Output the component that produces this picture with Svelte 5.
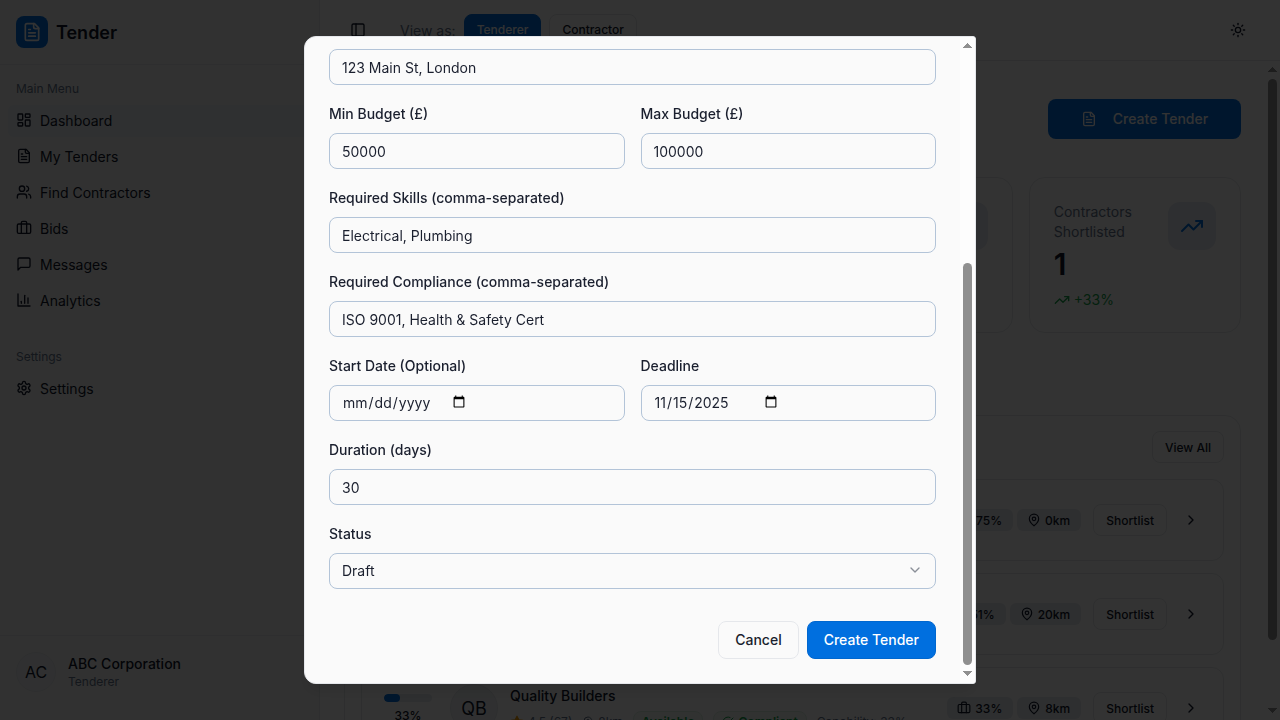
<script>
	import { onMount } from 'svelte';

	let formScroller;

	const icons = {
		dashboard: '<rect width="7" height="9" x="3" y="3" rx="1"/><rect width="7" height="5" x="14" y="3" rx="1"/><rect width="7" height="9" x="14" y="12" rx="1"/><rect width="7" height="5" x="3" y="16" rx="1"/>',
		file: '<path d="M15 2H6a2 2 0 0 0-2 2v16a2 2 0 0 0 2 2h12a2 2 0 0 0 2-2V7Z"/><path d="M14 2v4a2 2 0 0 0 2 2h4"/><path d="M10 9H8"/><path d="M16 13H8"/><path d="M16 17H8"/>',
		users: '<path d="M16 21v-2a4 4 0 0 0-4-4H6a4 4 0 0 0-4 4v2"/><circle cx="9" cy="7" r="4"/><path d="M22 21v-2a4 4 0 0 0-3-3.87"/><path d="M16 3.13a4 4 0 0 1 0 7.75"/>',
		briefcase: '<path d="M16 20V4a2 2 0 0 0-2-2h-4a2 2 0 0 0-2 2v16"/><rect width="20" height="14" x="2" y="6" rx="2"/>',
		message: '<path d="M21 15a2 2 0 0 1-2 2H7l-4 4V5a2 2 0 0 1 2-2h14a2 2 0 0 1 2 2z"/>',
		chart: '<path d="M3 3v18h18"/><path d="M18 17V9"/><path d="M13 17V5"/><path d="M8 17v-3"/>',
		gear: '<path d="M12.22 2h-.44a2 2 0 0 0-2 2v.18a2 2 0 0 1-1 1.73l-.43.25a2 2 0 0 1-2 0l-.15-.08a2 2 0 0 0-2.73.73l-.22.38a2 2 0 0 0 .73 2.73l.15.1a2 2 0 0 1 1 1.72v.51a2 2 0 0 1-1 1.74l-.15.09a2 2 0 0 0-.73 2.73l.22.38a2 2 0 0 0 2.73.73l.15-.08a2 2 0 0 1 2 0l.43.25a2 2 0 0 1 1 1.73V20a2 2 0 0 0 2 2h.44a2 2 0 0 0 2-2v-.18a2 2 0 0 1 1-1.73l.43-.25a2 2 0 0 1 2 0l.15.08a2 2 0 0 0 2.73-.73l.22-.39a2 2 0 0 0-.73-2.73l-.15-.08a2 2 0 0 1-1-1.74v-.5a2 2 0 0 1 1-1.74l.15-.09a2 2 0 0 0 .73-2.73l-.22-.38a2 2 0 0 0-2.73-.73l-.15.08a2 2 0 0 1-2 0l-.43-.25a2 2 0 0 1-1-1.73V4a2 2 0 0 0-2-2z"/><circle cx="12" cy="12" r="3"/>',
		panel: '<rect width="18" height="18" x="3" y="3" rx="2"/><path d="M9 3v18"/>',
		sun: '<circle cx="12" cy="12" r="4"/><path d="M12 2v2"/><path d="M12 20v2"/><path d="m4.93 4.93 1.41 1.41"/><path d="m17.66 17.66 1.41 1.41"/><path d="M2 12h2"/><path d="M20 12h2"/><path d="m6.34 17.66-1.41 1.41"/><path d="m19.07 4.93-1.41 1.41"/>',
		trending: '<polyline points="22 7 13.5 15.5 8.5 10.5 2 17"/><polyline points="16 7 22 7 22 13"/>',
		pin: '<path d="M20 10c0 6-8 12-8 12s-8-6-8-12a8 8 0 0 1 16 0Z"/><circle cx="12" cy="10" r="3"/>',
		chevronRight: '<path d="m9 18 6-6-6-6"/>',
		chevronDown: '<path d="m6 9 6 6 6-6"/>',
		star: '<polygon points="12 2 15.09 8.26 22 9.27 17 14.14 18.18 21.02 12 17.77 5.82 21.02 7 14.14 2 9.27 8.91 8.26"/>',
		check: '<path d="M22 11.08V12a10 10 0 1 1-5.93-9.14"/><polyline points="22 4 12 14.01 9 11.01"/>'
	};

	const mainMenu = [
		{ label: 'Dashboard', icon: 'dashboard', active: true },
		{ label: 'My Tenders', icon: 'file' },
		{ label: 'Find Contractors', icon: 'users' },
		{ label: 'Bids', icon: 'briefcase' },
		{ label: 'Messages', icon: 'message' },
		{ label: 'Analytics', icon: 'chart' }
	];

	const stats = [
		{ label: 'Active Tenders', value: '3', change: '+12%', icon: 'file' },
		{ label: 'Bids Received', value: '8', change: '+25%', icon: 'briefcase' },
		{ label: 'Open Messages', value: '2', change: '+8%', icon: 'message' },
		{ label: 'Contractors Shortlisted', value: '1', change: '+33%', icon: 'trending' }
	];

	const matches = [
		{ initials: 'AE', name: 'Apex Electrical', score: 75, rating: '4.8 (112)', km: 0 },
		{ initials: 'BS', name: 'BuildRight Services', score: 51, rating: '4.6 (89)', km: 20 },
		{ initials: 'QB', name: 'Quality Builders', score: 33, rating: '4.5 (67)', km: 8 }
	];

	onMount(() => {
		// dialog opens scrolled down to the footer
		formScroller.scrollTop = formScroller.scrollHeight;
	});
</script>

{#snippet icon(name, size = 16)}
	<svg width={size} height={size} viewBox="0 0 24 24" fill="none" stroke="currentColor" stroke-width="2" stroke-linecap="round" stroke-linejoin="round">
		{@html icons[name]}
	</svg>
{/snippet}

{#snippet scrollbar(thumbHeight, atEnd)}
	<div class="bar">
		<div class="arrow up"></div>
		<div class="track" class:at-end={atEnd}>
			<div class="thumb" style="height: {thumbHeight}px"></div>
		</div>
		<div class="arrow down"></div>
	</div>
{/snippet}

<div class="shell">
	<aside class="sidebar">
		<div class="brand">
			<div class="brand-icon">{@render icon('file', 20)}</div>
			<span class="brand-name">Tender</span>
		</div>

		<nav class="nav">
			<div class="nav-group">
				<div class="nav-title">Main Menu</div>
				{#each mainMenu as item}
					<a class="nav-item" class:active={item.active} href="#top">
						{@render icon(item.icon)}
						{item.label}
					</a>
				{/each}
			</div>
			<div class="nav-group">
				<div class="nav-title">Settings</div>
				<a class="nav-item" href="#top">
					{@render icon('gear')}
					Settings
				</a>
			</div>
		</nav>

		<div class="account">
			<div class="avatar small">AC</div>
			<div class="account-text">
				<div class="account-name">ABC Corporation</div>
				<div class="account-role">Tenderer</div>
			</div>
		</div>
	</aside>

	<div class="main">
		<header class="topbar">
			<span class="panel-toggle">{@render icon('panel')}</span>
			<span class="view-as">View as:</span>
			<button class="role-btn primary">Tenderer</button>
			<button class="role-btn">Contractor</button>
			<span class="theme-toggle">{@render icon('sun')}</span>
		</header>

		<div class="content-wrap">
			<div class="content">
				<div class="page-head">
					<div>
						<h1>Dashboard</h1>
						<p>Manage your tenders and find contractors</p>
					</div>
					<button class="create-btn">
						{@render icon('file')}
						Create Tender
					</button>
				</div>

				<div class="stats">
					{#each stats as stat}
						<div class="stat-card">
							<div class="stat-text">
								<div class="stat-label">{stat.label}</div>
								<div class="stat-value">{stat.value}</div>
								<div class="stat-change">{@render icon('trending')} {stat.change}</div>
							</div>
							<div class="stat-icon">{@render icon(stat.icon, 24)}</div>
						</div>
					{/each}
				</div>

				<section class="matches">
					<div class="matches-head">
						<h2>Recommended Contractors</h2>
						<button class="ghost-btn">View All</button>
					</div>
					<div class="match-list">
						{#each matches as match}
							<div class="match-row">
								<div class="score">
									<div class="score-track"><div class="score-fill" style="width: {match.score}%"></div></div>
									<span>{match.score}%</span>
								</div>
								<div class="avatar">{match.initials}</div>
								<div class="match-info">
									<div class="match-name">{match.name}</div>
									<div class="match-meta">
										<span class="meta-item"><span class="star">{@render icon('star', 14)}</span> {match.rating}</span>
										<span class="meta-item">{@render icon('pin', 12)} {match.km}km</span>
										<span class="tag">Available</span>
										<span class="tag">{@render icon('check', 12)} Compliant</span>
										<span>Capability: {match.score}%</span>
									</div>
								</div>
								<div class="match-actions">
									<span class="chip">{@render icon('briefcase', 14)} {match.score}%</span>
									<span class="chip">{@render icon('pin', 14)} {match.km}km</span>
									<button class="ghost-btn shortlist">Shortlist</button>
									<span class="chevron">{@render icon('chevronRight')}</span>
								</div>
							</div>
						{/each}
					</div>
				</section>
			</div>
			{@render scrollbar(561, false)}
		</div>
	</div>
</div>

<div class="overlay"></div>

<div class="dialog" role="dialog">
	<div class="dialog-body" bind:this={formScroller}>
		<div class="dialog-head">
			<h2>Create New Tender</h2>
			<p>Fill in the details below to publish a new tender to contractors.</p>
		</div>

		<form class="form">
			<div class="field">
				<label for="title">Tender Title</label>
				<input id="title" value="Office Renovation" />
			</div>
			<div class="field">
				<label for="description">Description</label>
				<textarea id="description">Full refurbishment of a two-floor office.</textarea>
			</div>
			<div class="field">
				<label for="location">Location</label>
				<input id="location" value="123 Main St, London" />
			</div>
			<div class="two-col">
				<div class="field">
					<label for="min">Min Budget (£)</label>
					<input id="min" value="50000" />
				</div>
				<div class="field">
					<label for="max">Max Budget (£)</label>
					<input id="max" value="100000" />
				</div>
			</div>
			<div class="field">
				<label for="skills">Required Skills (comma-separated)</label>
				<input id="skills" value="Electrical, Plumbing" />
			</div>
			<div class="field">
				<label for="compliance">Required Compliance (comma-separated)</label>
				<input id="compliance" value="ISO 9001, Health &amp; Safety Cert" />
			</div>
			<div class="two-col">
				<div class="field">
					<label for="start">Start Date (Optional)</label>
					<input id="start" type="date" />
				</div>
				<div class="field">
					<label for="deadline">Deadline</label>
					<input id="deadline" type="date" value="2025-11-15" />
				</div>
			</div>
			<div class="field">
				<label for="duration">Duration (days)</label>
				<input id="duration" value="30" />
			</div>
			<div class="field">
				<label for="status">Status</label>
				<button id="status" type="button" class="select">
					Draft
					<span class="select-chevron">{@render icon('chevronDown')}</span>
				</button>
			</div>
			<div class="form-actions">
				<button type="button" class="cancel">Cancel</button>
				<button type="button" class="submit">Create Tender</button>
			</div>
		</form>
	</div>
	{@render scrollbar(402, true)}
</div>

<style>
	:global(body) {
		font-family: Inter, "Liberation Sans", sans-serif;
		color: #0f172a;
		overflow: hidden;
	}

	.shell {
		display: flex;
		height: 100vh;
		background: #fff;
	}

	.sidebar {
		width: 320px;
		flex-shrink: 0;
		display: flex;
		flex-direction: column;
		background: #f5f5f5;
		border-right: 1px solid #e5e7eb;
		box-sizing: border-box;
	}

	.brand {
		height: 65px;
		flex-shrink: 0;
		box-sizing: border-box;
		display: flex;
		align-items: center;
		gap: 8px;
		padding: 0 16px;
		border-bottom: 1px solid #e5e7eb;
	}

	.brand-icon {
		width: 32px;
		height: 32px;
		border-radius: 8px;
		background: #006fdf;
		color: #fff;
		display: flex;
		align-items: center;
		justify-content: center;
	}

	.brand-name {
		font-size: 18px;
		font-weight: 600;
	}

	.nav {
		flex: 1;
		padding: 16px 8px;
		display: flex;
		flex-direction: column;
		gap: 32px;
	}

	.nav-group {
		display: flex;
		flex-direction: column;
		gap: 4px;
	}

	.nav-title {
		font-size: 12px;
		color: #64748b;
		padding: 0 8px;
		height: 16px;
		line-height: 16px;
		margin-bottom: 4px;
	}

	.nav-item {
		height: 32px;
		box-sizing: border-box;
		display: flex;
		align-items: center;
		gap: 8px;
		padding: 0 8px 2px;
		border-radius: 6px;
		font-size: 14px;
		color: #0f172a;
		text-decoration: none;
	}

	.nav-item.active {
		background: #e9edf2;
	}

	.account {
		height: 85px;
		flex-shrink: 0;
		box-sizing: border-box;
		display: flex;
		align-items: flex-start;
		gap: 12px;
		padding: 16px 16px 0;
		border-top: 1px solid #e5e7eb;
	}

	.account-text {
		margin-top: 2px;
	}

	.account-name {
		font-size: 14px;
		font-weight: 500;
		line-height: 20px;
	}

	.account-role {
		font-size: 12px;
		color: #64748b;
		line-height: 16px;
	}

	.avatar {
		width: 48px;
		height: 48px;
		flex-shrink: 0;
		box-sizing: border-box;
		border: 1px solid #e5e7eb;
		border-radius: 50%;
		background: #eef1f5;
		display: flex;
		align-items: center;
		justify-content: center;
		font-size: 18px;
	}

	.avatar.small {
		width: 40px;
		height: 40px;
		font-size: 16px;
	}

	.main {
		flex: 1;
		min-width: 0;
		display: flex;
		flex-direction: column;
	}

	.topbar {
		height: 61px;
		flex-shrink: 0;
		box-sizing: border-box;
		display: flex;
		align-items: center;
		padding: 0 34px 0 30px;
		border-bottom: 1px solid #e5e7eb;
	}

	.panel-toggle {
		display: flex;
		margin-right: 34px;
	}

	.view-as {
		font-size: 14px;
		color: #64748b;
		margin-right: 8px;
	}

	.role-btn {
		height: 32px;
		padding: 0 12px 1px;
		margin-right: 8px;
		border: 1px solid #e5e7eb;
		border-radius: 8px;
		background: #fff;
		font: 500 12px Inter, sans-serif;
		color: #0f172a;
	}

	.role-btn.primary {
		background: #006fdf;
		border-color: #006fdf;
		color: #fff;
	}

	.theme-toggle {
		display: flex;
		margin-left: auto;
	}

	.content-wrap {
		flex: 1;
		min-height: 0;
		display: flex;
	}

	.content {
		flex: 1;
		min-width: 0;
		overflow-y: auto;
		padding: 29px 24px 24px;
	}

	/* classic scrollbar, drawn so it shows in the headless page too */
	.bar {
		width: 15px;
		flex-shrink: 0;
		display: flex;
		flex-direction: column;
	}

	.track {
		flex: 1;
		min-height: 0;
		padding: 3px;
		display: flex;
		flex-direction: column;
	}

	.track.at-end {
		justify-content: flex-end;
	}

	.thumb {
		flex-shrink: 0;
		background: #909090;
		border-radius: 5px;
	}

	.arrow {
		height: 15px;
		flex-shrink: 0;
		background-repeat: no-repeat;
		background-size: 9px 5px;
	}

	.arrow.up {
		background-image: conic-gradient(from 135deg at 50% 0, #909090 90deg, transparent 0);
		background-position: center 6px;
	}

	.arrow.down {
		background-image: conic-gradient(from -45deg at 50% 100%, #909090 90deg, transparent 0);
		background-position: center 3px;
	}

	.page-head {
		display: flex;
		justify-content: space-between;
		align-items: center;
		margin-bottom: 30px;
	}

	.page-head h1 {
		font-size: 30px;
		margin: 0;
	}

	.page-head p {
		margin: 4px 0 0;
		font-size: 14px;
		color: #64748b;
	}

	.create-btn {
		width: 193px;
		height: 40px;
		display: flex;
		align-items: center;
		justify-content: center;
		gap: 16px;
		border: 0;
		border-radius: 8px;
		background: #006fdf;
		color: #fff;
		font: 500 14px Inter, sans-serif;
	}

	.stats {
		display: grid;
		grid-template-columns: repeat(4, 1fr);
		gap: 16px;
		margin-bottom: 82px;
	}

	.stat-card {
		height: 156px;
		box-sizing: border-box;
		display: flex;
		justify-content: space-between;
		padding: 24px;
		border: 1px solid #e5e7eb;
		border-radius: 16px;
	}

	.stat-label {
		font-size: 14px;
		line-height: 20px;
		color: #64748b;
		margin-right: 20px;
	}

	.stat-value {
		font-size: 30px;
		font-weight: 600;
		line-height: 36px;
		margin-top: 4px;
	}

	.stat-change {
		display: flex;
		align-items: center;
		gap: 4px;
		margin-top: 9px;
		font-size: 14px;
		color: #16a34a;
	}

	.stat-icon {
		width: 48px;
		height: 48px;
		flex-shrink: 0;
		border-radius: 12px;
		background: #e6ebf2;
		color: #006fdf;
		display: flex;
		align-items: center;
		justify-content: center;
	}

	.matches {
		border: 1px solid #e5e7eb;
		border-radius: 16px;
		padding: 15px 16px 16px;
	}

	.matches-head {
		display: flex;
		justify-content: space-between;
		align-items: center;
		margin-bottom: 16px;
	}

	.matches-head h2 {
		font-size: 18px;
		font-weight: 600;
		margin: 0;
	}

	.ghost-btn {
		height: 32px;
		padding: 0 12px;
		border: 1px solid #e5e7eb;
		border-radius: 8px;
		background: #fff;
		color: #0f172a;
		font: 500 12px Inter, sans-serif;
	}

	.match-list {
		display: flex;
		flex-direction: column;
		gap: 12px;
	}

	.match-row {
		height: 82px;
		flex-shrink: 0;
		box-sizing: border-box;
		display: flex;
		align-items: center;
		gap: 18px;
		padding: 0 24px 0 21px;
		border: 1px solid #e5e7eb;
		border-radius: 12px;
	}

	.score {
		width: 48px;
		margin-left: 1px;
		flex-shrink: 0;
		text-align: center;
		font-size: 12px;
		font-weight: 500;
	}

	.score-track {
		height: 8px;
		border-radius: 4px;
		background: #e6eaf0;
		margin-bottom: 6px;
		overflow: hidden;
	}

	.score-fill {
		height: 100%;
		background: #006fdf;
		border-radius: 4px;
	}

	.match-info {
		margin: 2px 0 0 -6px;
		min-width: 0;
		flex: 1;
	}

	.match-name {
		font-size: 14px;
		font-weight: 500;
		line-height: 20px;
		margin-bottom: 5px;
	}

	.match-meta {
		display: flex;
		align-items: center;
		gap: 10px;
		font-size: 12px;
		color: #64748b;
		white-space: nowrap;
	}

	.meta-item {
		display: flex;
		align-items: center;
		gap: 4px;
	}

	.star {
		display: flex;
		color: #f59e0b;
	}

	.star :global(svg) {
		fill: currentColor;
	}

	.tag {
		display: inline-flex;
		align-items: center;
		gap: 4px;
		height: 20px;
		padding: 0 8px;
		border: 1px solid #dcefe2;
		border-radius: 8px;
		font-weight: 600;
		color: #16a34a;
		background: #f3fbf5;
	}

	.match-actions {
		display: flex;
		align-items: center;
		gap: 4px;
		flex-shrink: 0;
	}

	.chip {
		display: flex;
		align-items: center;
		gap: 4px;
		height: 22px;
		padding: 0 11px 0 10px;
		border-radius: 6px;
		background: #e6eaf0;
		font-size: 12px;
		font-weight: 500;
	}

	.shortlist {
		margin-left: 8px;
	}

	.chevron {
		display: flex;
		margin: 0 0 0 12px;
	}

	.overlay {
		position: fixed;
		inset: 0;
		background: rgba(0, 0, 0, 0.8);
	}

	.dialog {
		position: fixed;
		left: 304px;
		top: 36px;
		width: 672px;
		height: 648px;
		box-sizing: border-box;
		display: flex;
		background: #fafafa;
		border: 1px solid #e5e7eb;
		border-radius: 12px 3px 3px 12px;
		box-shadow: 0 10px 15px -3px rgba(0, 0, 0, 0.1);
	}

	.dialog .bar {
		background: #fdfdfd;
		border-radius: 0 2px 2px 0;
	}

	.dialog-body {
		flex: 1;
		min-width: 0;
		box-sizing: border-box;
		padding: 24px;
		overflow-y: auto;
	}

	.dialog-head h2 {
		font-size: 18px;
		font-weight: 600;
		margin: 0 0 6px;
	}

	.dialog-head p {
		font-size: 14px;
		color: #64748b;
		margin: 0 0 32px;
	}

	.form {
		display: flex;
		flex-direction: column;
		gap: 20px;
	}

	.two-col {
		display: grid;
		grid-template-columns: 1fr 1fr;
		gap: 16px;
	}

	.field {
		display: flex;
		flex-direction: column;
		gap: 10px;
	}

	label {
		font-size: 14px;
		font-weight: 500;
		line-height: 18px;
		color: #1a1f2e;
	}

	input,
	textarea,
	.select {
		box-sizing: border-box;
		width: 100%;
		height: 36px;
		padding: 0 12px;
		border: 1px solid #b3c4d8;
		border-radius: 8px;
		background: transparent;
		font: 400 14px Inter, sans-serif;
		color: #1a1f2e;
	}

	input[type="date"] {
		padding-bottom: 2px;
	}

	input[type="date"]::-webkit-datetime-edit {
		flex: 0 0 108px;
	}

	input[type="date"]::-webkit-calendar-picker-indicator {
		margin-left: 0;
	}

	textarea {
		height: 80px;
		padding: 8px 12px;
		resize: none;
	}

	.select {
		display: flex;
		align-items: center;
		justify-content: space-between;
		padding-bottom: 2px;
		text-align: left;
	}

	.select-chevron {
		display: flex;
		color: #8a8f98;
	}

	.form-actions {
		display: flex;
		justify-content: flex-end;
		gap: 8px;
		margin-top: 12px;
	}

	.cancel,
	.submit {
		height: 38px;
		padding: 0 16px 2px;
		border-radius: 8px;
		font: 500 14px Inter, sans-serif;
	}

	.cancel {
		background: #fafafa;
		border: 1px solid #e5e7eb;
		color: #1a1f2e;
	}

	.submit {
		background: #006fdf;
		border: 1px solid #0067cf;
		color: #fff;
	}
</style>
